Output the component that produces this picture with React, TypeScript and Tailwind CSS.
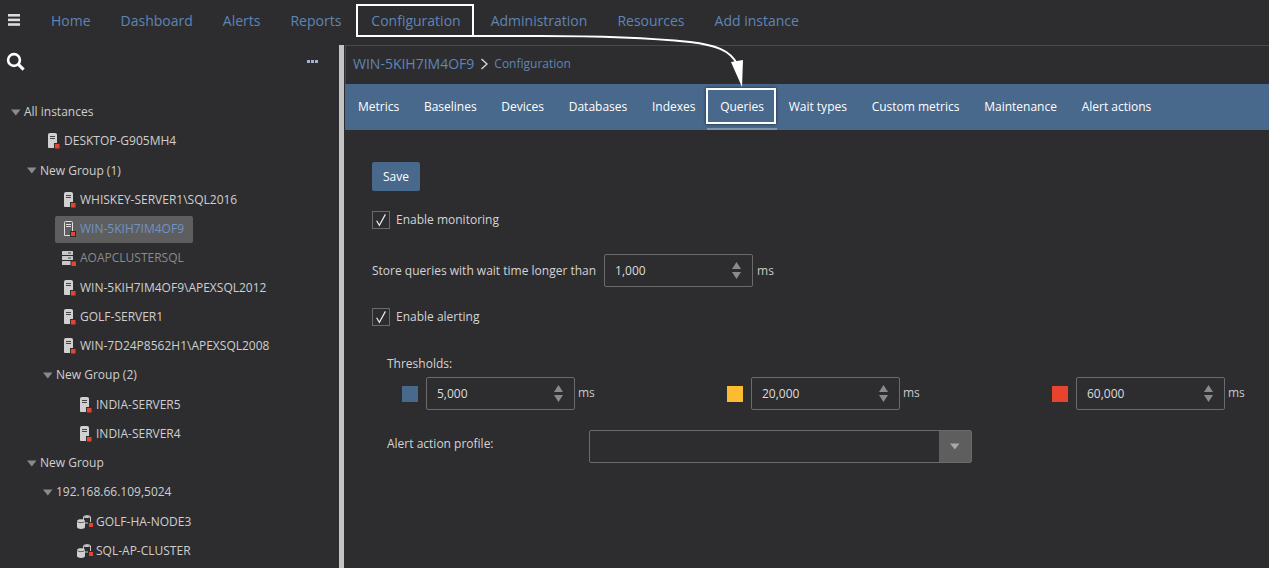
import React from "react";

const F = { fontFamily: '"Open Sans", "Liberation Sans", sans-serif' };

function Caret({ className = "" }: { className?: string }) {
  return (
    <svg width="10" height="7" viewBox="0 0 10 7" className={className}>
      <path d="M0 0.5H9.5L4.8 6.5Z" fill="#8a8a8a" />
    </svg>
  );
}

function ServerIcon({ selected }: { selected?: boolean }) {
  return (
    <svg width="12" height="16" viewBox="0 0 12 16" className="shrink-0">
      <path d="M0.5 1.5a1 1 0 0 1 1-1h6a1 1 0 0 1 1 1V14.5H0.5Z" fill={selected ? "#5e5e5e" : "#d0d0d0"} stroke={selected ? "#e0e0e0" : "#d0d0d0"} />
      <rect x="2" y="3" width="5" height="1" fill={selected ? "#e0e0e0" : "#444"} />
      <rect x="2" y="5" width="5" height="1" fill={selected ? "#e0e0e0" : "#444"} />
      {selected ? (
        <rect x="6.5" y="10.5" width="5" height="5" fill="#e8432f" stroke="#2d2d30" />
      ) : (
        <>
          <rect x="6" y="10" width="6" height="6" fill="#2d2d30" />
          <rect x="7" y="11" width="4.5" height="4.5" fill="#e8432f" />
        </>
      )}
    </svg>
  );
}

function ClusterIcon() {
  return (
    <svg width="14" height="15" viewBox="0 0 14 15" className="shrink-0">
      <rect x="0" y="0" width="11" height="4" rx="0.5" fill="#c8c8c8" />
      <rect x="0" y="5" width="11" height="4" rx="0.5" fill="#c8c8c8" />
      <rect x="0" y="10" width="11" height="4" rx="0.5" fill="#c8c8c8" />
      <rect x="6" y="1.5" width="3" height="1" fill="#444" />
      <rect x="6" y="6.5" width="3" height="1" fill="#444" />
      <rect x="8.5" y="9.5" width="5.5" height="5.5" fill="#2d2d30" />
      <rect x="9.5" y="10.5" width="4.5" height="4.5" fill="#e8432f" />
    </svg>
  );
}

function DbIcon() {
  return (
    <svg width="16" height="14" viewBox="0 0 16 14" className="shrink-0">
      <path d="M6.5 2C6.5 0.2 13.5 0.2 13.5 2V8H6.5Z" fill="#2d2d30" stroke="#c8c8c8" />
      <ellipse cx="10" cy="2" rx="3.2" ry="1.1" fill="#c8c8c8" />
      <path d="M0 6C0 3.8 8 3.8 8 6V12C8 14.5 0 14.5 0 12Z" fill="#d0d0d0" />
      <path d="M0.3 6.6C1.5 8 6.5 8 7.7 6.6" fill="none" stroke="#444" strokeWidth="0.8" />
      <rect x="11" y="7" width="5" height="5.5" fill="#2d2d30" />
      <rect x="12" y="8" width="4" height="4" fill="#e8432f" />
    </svg>
  );
}

function Spinner() {
  return (
    <span className="flex flex-col gap-[3px] items-center">
      <svg width="9" height="7" viewBox="0 0 9 7"><path d="M4.5 0L9 7H0Z" fill="#8a8a8a" /></svg>
      <svg width="9" height="7" viewBox="0 0 9 7"><path d="M0 0H9L4.5 7Z" fill="#8a8a8a" /></svg>
    </span>
  );
}

function NumberBox({ value }: { value: string }) {
  return (
    <div className="w-[149px] h-[33px] border border-[#6a6a6a] rounded-[2px] flex items-center justify-between pl-[10px] pr-[11px] text-[12px] text-[#dcdcdc]">
      <span>{value}</span>
      <Spinner />
    </div>
  );
}

function Check({ label }: { label: string }) {
  return (
    <div className="flex items-center h-[18px] gap-[6px] text-[12px] text-[#d4d4d4]">
      <span className="w-[18px] h-[18px] border border-[#6a6a6a] flex items-center justify-center">
        <svg width="14" height="14" viewBox="0 0 14 14"><path d="M2.6 7.8L5.4 12.4L11.4 1.4" fill="none" stroke="#ececec" strokeWidth="1.2" /></svg>
      </span>
      <span>{label}</span>
    </div>
  );
}

function Threshold({ color, value, className }: { color: string; value: string; className: string }) {
  return (
    <div className={`flex items-center ${className}`}>
      <span className={`w-4 h-4 mr-2 ${color}`} />
      <NumberBox value={value} />
      <span className="ml-[3px] text-[12px] text-[#c8c8c8] mt-[-1px]">ms</span>
    </div>
  );
}

type Row = { label: string; depth: number; kind: "group" | "server" | "cluster" | "db"; selected?: boolean; muted?: boolean };

const rows: Row[] = [
  { label: "All instances", depth: 0, kind: "group" },
  { label: "DESKTOP-G905MH4", depth: 1, kind: "server" },
  { label: "New Group (1)", depth: 1, kind: "group" },
  { label: "WHISKEY-SERVER1\\SQL2016", depth: 2, kind: "server" },
  { label: "WIN-5KIH7IM4OF9", depth: 2, kind: "server", selected: true },
  { label: "AOAPCLUSTERSQL", depth: 2, kind: "cluster", muted: true },
  { label: "WIN-5KIH7IM4OF9\\APEXSQL2012", depth: 2, kind: "server" },
  { label: "GOLF-SERVER1", depth: 2, kind: "server" },
  { label: "WIN-7D24P8562H1\\APEXSQL2008", depth: 2, kind: "server" },
  { label: "New Group (2)", depth: 2, kind: "group" },
  { label: "INDIA-SERVER5", depth: 3, kind: "server" },
  { label: "INDIA-SERVER4", depth: 3, kind: "server" },
  { label: "New Group", depth: 1, kind: "group" },
  { label: "192.168.66.109,5024", depth: 2, kind: "group" },
  { label: "GOLF-HA-NODE3", depth: 3, kind: "db" },
  { label: "SQL-AP-CLUSTER", depth: 3, kind: "db" },
];

const nav = ["Home", "Dashboard", "Alerts", "Reports", "Configuration", "Administration", "Resources", "Add instance"];
const tabs = ["Metrics", "Baselines", "Devices", "Databases", "Indexes", "Queries", "Wait types", "Custom metrics", "Maintenance", "Alert actions"];

function TreeRow({ r }: { r: Row }) {
  const groupPad = ["pl-[11px]", "pl-[27px]", "pl-[43px]", "pl-[59px]"][r.depth];
  const leafPad = ["pl-[27px]", "pl-[48px]", "pl-[64px]", "pl-[80px]"][r.depth];
  if (r.kind === "group") {
    return (
      <div className={`h-[29.25px] flex items-center ${groupPad}`}>
        <Caret className="mr-[3px]" />
        <span className="text-[12px] text-[#cfcfcf]">{r.label}</span>
      </div>
    );
  }
  const icon =
    r.kind === "server" ? <ServerIcon selected={r.selected} /> : r.kind === "cluster" ? <ClusterIcon /> : <DbIcon />;
  const iconBox = r.kind === "db" ? "w-[19px] -ml-[3px]" : r.kind === "cluster" ? "w-[18px] -ml-[2px]" : "w-[16px]";
  const rowInner = (
    <>
      <span className={`flex items-center ${iconBox}`}>{icon}</span>
      <span className={`text-[12px] ${r.selected ? "text-[#6f93c2]" : r.muted ? "text-[#8a8a8a]" : "text-[#cfcfcf]"}`}>{r.label}</span>
    </>
  );
  return (
    <div className={`h-[29.25px] flex items-center ${leafPad}`}>
      {r.selected ? (
        <div className="flex items-center h-[27px] -ml-[9px] pl-[9px] pr-[9px] bg-[#5e5e5e] rounded-[2px]">{rowInner}</div>
      ) : (
        rowInner
      )}
    </div>
  );
}

export default function App() {
  return (
    <div className="relative w-[1269px] h-[568px] overflow-hidden bg-[#2d2d30] flex flex-col" style={F}>
      {/* top nav */}
      <div className="h-[45px] shrink-0 flex items-center pl-[8px]">
        <svg width="12" height="12" viewBox="0 0 12 12" className="mr-[31px] -mt-[6px]">
          <rect width="12" height="2.6" y="0" fill="#dcdcdc" />
          <rect width="12" height="2.6" y="4.6" fill="#dcdcdc" />
          <rect width="12" height="2.6" y="9.2" fill="#dcdcdc" />
        </svg>
        <div className="flex gap-[30px] -mt-[5px] text-[14px] text-[#5f85b5]">
          {nav.map((n) => (
            <span key={n}>{n}</span>
          ))}
        </div>
      </div>

      <div className="flex flex-1 min-h-0">
        {/* sidebar */}
        <div className="w-[339px] shrink-0 flex flex-col">
          <div className="h-[37px] shrink-0 flex items-center justify-between pl-[6px] pr-[21px]">
            <svg width="20" height="20" viewBox="0 0 20 20" className="-mt-[3px]">
              <circle cx="8" cy="8" r="5.9" fill="none" stroke="#fff" strokeWidth="2.6" />
              <path d="M12.4 12.4L17.6 17.6" stroke="#fff" strokeWidth="3" />
            </svg>
            <span className="flex gap-[1px] -mt-[5px]">
              <span className="w-[3px] h-[3px] bg-[#9fb4d0]" />
              <span className="w-[3px] h-[3px] bg-[#9fb4d0]" />
              <span className="w-[3px] h-[3px] bg-[#9fb4d0]" />
            </span>
          </div>
          <div className="pt-[15.4px]">
            {rows.map((r) => (
              <TreeRow key={r.label} r={r} />
            ))}
          </div>
        </div>

        {/* splitter */}
        <div className="w-[5px] shrink-0 bg-[#c4c4c4]" />
        <div className="w-px shrink-0 bg-[#2d2d30]" />

        {/* main */}
        <div className="flex-1 min-w-0 flex flex-col">
          <div className="h-[39px] shrink-0 border-t border-l border-[#4a4a4a] flex items-center pl-[7px] pb-[3px]">
            <span className="text-[14px] text-[#5f85b5]">WIN-5KIH7IM4OF9</span>
            <svg width="9" height="12" viewBox="0 0 9 12" className="ml-[6px] mr-[5px]">
              <path d="M1.5 1L7 6L1.5 11" fill="none" stroke="#dcdcdc" strokeWidth="1.3" />
            </svg>
            <span className="text-[12px] text-[#5f85b5]">Configuration</span>
          </div>
          <div className="h-[46px] shrink-0 bg-[#48688c] flex items-center pl-[13px] gap-[24.7px] text-[12px] text-white">
            {tabs.map((t) => (
              <span key={t} className={t === "Queries" ? "relative self-stretch flex items-center" : ""}>
                {t}
                {t === "Queries" && <span className="absolute -left-[13px] -right-[13px] bottom-0 h-[2px] bg-[#7c93ae]" />}
              </span>
            ))}
          </div>
          <div className="flex-1 pl-[27px] pt-[32px]">
            <button className="w-[48px] h-[29px] bg-[#48688c] rounded-[2px] text-[12px] text-white block">Save</button>
            <div className="mt-[20px]">
              <Check label="Enable monitoring" />
            </div>
            <div className="mt-[25px] flex items-center text-[12px] text-[#d4d4d4]">
              <span>Store queries with wait time longer than</span>
              <span className="ml-[8px]">
                <NumberBox value="1,000" />
              </span>
              <span className="ml-[4px] text-[#c8c8c8]">ms</span>
            </div>
            <div className="mt-[21px]">
              <Check label="Enable alerting" />
            </div>
            <div className="pl-[15px]">
              <div className="mt-[30px] text-[12px] text-[#d4d4d4] leading-[16px]">Thresholds:</div>
              <div className="mt-[5px] flex items-center">
                <Threshold color="bg-[#48688c]" value="5,000" className="w-[325px] pl-[15px]" />
                <Threshold color="bg-[#fdbb30]" value="20,000" className="w-[325px] pl-[15px]" />
                <Threshold color="bg-[#e8432f]" value="60,000" className="pl-[15px]" />
              </div>
              <div className="mt-[20px] flex items-center">
                <span className="w-[202px] text-[12px] text-[#d4d4d4] -mt-[6px]">Alert action profile:</span>
                <div className="w-[383px] h-[33px] border border-[#6a6a6a] rounded-[2px] flex justify-end">
                  <span className="w-[32px] bg-[#5e5e5e] flex items-center justify-center">
                    <svg width="10" height="7" viewBox="0 0 10 7"><path d="M0 0.5H9.5L4.8 6.5Z" fill="#a8a8a8" /></svg>
                  </span>
                </div>
              </div>
            </div>
          </div>
        </div>
      </div>

      {/* annotation overlay */}
      <div className="absolute left-[356px] top-[4px] w-[118px] h-[33px] border-2 border-white" />
      <div className="absolute left-[706px] top-[88px] w-[70px] h-[36px] border-2 border-white shadow-[0_0_3px_rgba(0,0,0,0.6)]" />
      <svg className="absolute left-0 top-0 pointer-events-none" width="1269" height="568" viewBox="0 0 1269 568">
        <path d="M473 36H540C600 36 650 38 690 42C715 45 730 50 737 64" fill="none" stroke="#fff" strokeWidth="2" />
        <path d="M731 62L743 60L742 87Z" fill="#fff" />
      </svg>
    </div>
  );
}
